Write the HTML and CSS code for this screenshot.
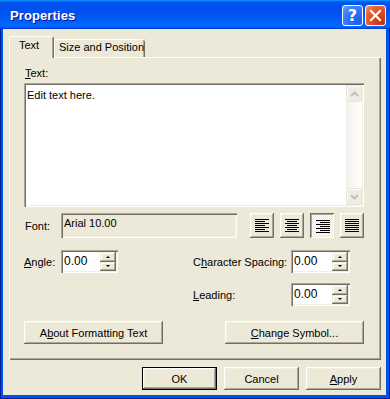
FILE: index.html
```html
<!DOCTYPE html>
<html>
<head>
<meta charset="utf-8">
<link rel="stylesheet" href="styles.css">
</head>
<body>
<div class="window">
  <div class="titlebar">
    <span class="title">Properties</span>
    <div class="tb-buttons">
      <div class="tb-btn help">?</div>
      <div class="tb-btn close">
        <svg width="13" height="13" viewBox="0 0 13 13"><path d="M2 2 L11 11 M11 2 L2 11" stroke="#fff" stroke-width="2.2" stroke-linecap="square"/></svg>
      </div>
    </div>
  </div>
  <div class="client">
    <div class="tabs">
      <div class="tab active">Text</div>
      <div class="tab">Size and Position</div>
    </div>
    <div class="panel">
      <div class="label-text"><u>T</u>ext:</div>
      <div class="textarea">
        <div class="ta-content">Edit text here.</div>
        <div class="vscroll">
          <div class="sb-btn"><svg width="9" height="6" viewBox="0 0 9 6"><path d="M1 5 L4.5 1.5 L8 5" fill="none" stroke="#c2c1b7" stroke-width="2"/></svg></div>
          <div class="sb-track"></div>
          <div class="sb-btn"><svg width="9" height="6" viewBox="0 0 9 6"><path d="M1 1 L4.5 4.5 L8 1" fill="none" stroke="#c2c1b7" stroke-width="2"/></svg></div>
        </div>
      </div>
      <div class="font-row">
        <span class="lbl">Font:</span>
        <div class="font-field">Arial 10.00</div>
        <div class="align-group">
          <div class="align-btn"><svg width="14" height="13" viewBox="0 0 14 13"><path d="M0 0.5h14M0 2.5h10M0 4.5h14M0 6.5h10M0 8.5h14M0 10.5h10M0 12.5h14" stroke="#000"/></svg></div>
          <div class="align-btn"><svg width="14" height="13" viewBox="0 0 14 13"><path d="M0 0.5h14M2 2.5h10M0 4.5h14M2 6.5h10M0 8.5h14M2 10.5h10M0 12.5h14" stroke="#000"/></svg></div>
          <div class="align-btn pressed"><svg width="14" height="13" viewBox="0 0 14 13"><path d="M0 0.5h14M4 2.5h10M0 4.5h14M4 6.5h10M0 8.5h14M4 10.5h10M0 12.5h14" stroke="#000"/></svg></div>
          <div class="align-btn"><svg width="14" height="13" viewBox="0 0 14 13"><path d="M0 0.5h14M0 2.5h14M0 4.5h14M0 6.5h14M0 8.5h14M0 10.5h14M0 12.5h14" stroke="#000"/></svg></div>
        </div>
      </div>
      <div class="spin-grid">
        <span class="lbl"><u>A</u>ngle:</span>
        <div class="spinner"><span class="val">0.00</span><div class="spin-btns"><div class="spin-b"><i class="up"></i></div><div class="spin-b"><i class="down"></i></div></div></div>
        <span></span>
        <span class="lbl">C<u>h</u>aracter Spacing:</span>
        <div class="spinner"><span class="val">0.00</span><div class="spin-btns"><div class="spin-b"><i class="up"></i></div><div class="spin-b"><i class="down"></i></div></div></div>
        <span></span><span></span><span></span>
        <span class="lbl"><u>L</u>eading:</span>
        <div class="spinner"><span class="val">0.00</span><div class="spin-btns"><div class="spin-b"><i class="up"></i></div><div class="spin-b"><i class="down"></i></div></div></div>
      </div>
      <div class="btn-row">
        <div class="btn wide">A<u>b</u>out Formatting Text</div>
        <div class="btn wide"><u>C</u>hange Symbol...</div>
      </div>
    </div>
    <div class="footer">
      <div class="btn default">OK</div>
      <div class="btn">Cancel</div>
      <div class="btn"><u>A</u>pply</div>
    </div>
  </div>
</div>
</body>
</html>
```
FILE: styles.css
```css
* { box-sizing: border-box; }
html, body { margin: 0; padding: 0; }
body {
  width: 390px;
  height: 399px;
  overflow: hidden;
  font-family: "Liberation Sans", Arial, sans-serif;
  font-size: 11px;
  color: #000;
  background: #0831d9;
}
u { text-decoration: underline; text-underline-offset: 1px; }

.window {
  width: 390px;
  height: 399px;
  display: flex;
  flex-direction: column;
  background: #0054e3;
  box-shadow: inset 1px 0 #001ea0, inset -1px 0 #001ea0, inset 0 -1px #001ea0;
}

.titlebar {
  height: 29px;
  flex: none;
  display: flex;
  align-items: center;
  justify-content: space-between;
  padding: 0 4px 0 10px;
  background: linear-gradient(180deg, #0997ff 0, #0053ee 8%, #0050ee 40%, #0066ff 88%, #0066ff 93%, #005bff 95%, #003dd7 96%, #003dd7 100%);
}
.title {
  color: #fff;
  font-family: "Liberation Sans", Arial, sans-serif;
  font-weight: bold;
  font-size: 13px;
  letter-spacing: 0.1px;
  text-shadow: 1px 1px #0f1089;
  margin-top: 1px;
}
.tb-buttons { display: flex; gap: 2px; margin-top: 2px; }
.tb-btn {
  width: 21px;
  height: 21px;
  border: 1px solid #fff;
  border-radius: 3px;
  display: flex;
  align-items: center;
  justify-content: center;
}
.tb-btn.help {
  background: radial-gradient(circle at 80% 85%, #1a5ff0 0, #2b6cf5 40%, #3f88fb 75%, #73a8fa 100%);
  color: #fff;
  font-family: "DejaVu Sans", sans-serif;
  font-weight: bold;
  font-size: 16px;
  line-height: 1;
}
.tb-btn.close {
  background: radial-gradient(circle at 85% 85%, #c2330b 0, #d74a21 40%, #e4663f 75%, #f0a283 100%);
}

.client {
  flex: 1;
  margin: 0 4px 4px 3px;
  background: #ece9d8;
  padding: 7px 5px 0 6px;
  display: flex;
  flex-direction: column;
}

.tabs {
  display: flex;
  align-items: flex-end;
  height: 21px;
  position: relative;
  z-index: 1;
}
.tab {
  height: 18px;
  padding: 0 4px 0 5px;
  line-height: 17px;
  background: #ece9d8;
  box-shadow: inset 1px 0 #fff, inset 0 1px #fff, inset -1px 0 #716f64, inset -2px 0 #aca899;
  border-radius: 2px 2px 0 0;
  white-space: nowrap;
  width: 91px;
}
.tab.active {
  height: 22px;
  margin-bottom: -1px;
  width: 45px;
  padding: 2px 0 0 10px;
  line-height: 15px;
}

.panel {
  height: 303px;
  width: 372px;
  background: #ece9d8;
  box-shadow: inset 1px 1px #fff, inset -1px -1px #716f64, inset -2px -2px #aca899;
  padding: 0 17px 0 15px;
  display: flex;
  flex-direction: column;
}

.label-text {
  margin-top: 9px;
  height: 14px;
  line-height: 14px;
  padding-left: 1px;
}
.textarea {
  margin-top: 3px;
  width: 340px;
  height: 124px;
  background: #fff;
  box-shadow: inset 1px 1px #aca899, inset 2px 2px #716f64, inset -1px -1px #fff, inset -2px -2px #f1efe2;
  padding: 2px;
  display: flex;
}
.ta-content {
  flex: 1;
  padding: 3px 0 0 1px;
  line-height: 14px;
}
.vscroll {
  width: 16px;
  display: flex;
  flex-direction: column;
  background: linear-gradient(90deg, #f3f1ec, #fefefb);
}
.sb-btn {
  height: 17px;
  background: #eeede5;
  border: 1px solid #e8e6dc;
  border-radius: 2px;
  display: flex;
  align-items: center;
  justify-content: center;
  box-shadow: inset 1px 1px #fbfbf8;
}
.sb-track { flex: 1; }

.font-row {
  margin-top: 6px;
  height: 25px;
  display: flex;
  align-items: center;
}
.lbl { white-space: nowrap; }
.font-row .lbl { width: 37px; padding-left: 1px; }
.font-field {
  width: 176px;
  height: 25px;
  background: #ece9d8;
  box-shadow: inset 1px 1px #aca899, inset 2px 2px #716f64, inset -1px -1px #fff, inset -2px -2px #f1efe2;
  padding: 3px 0 0 3px;
  line-height: 14px;
}
.align-group {
  margin-left: 13px;
  display: flex;
  gap: 6px;
}
.align-btn {
  width: 24px;
  height: 25px;
  background: #ece9d8;
  box-shadow: inset -1px -1px #716f64, inset 1px 1px #fff, inset -2px -2px #aca899, inset 2px 2px #f1efe2;
  display: flex;
  align-items: center;
  justify-content: center;
}
.align-btn.pressed {
  background: repeating-conic-gradient(#fff 0 25%, #ece9d8 0 50%) 0 0 / 2px 2px;
  box-shadow: inset 1px 1px #716f64, inset -1px -1px #fff, inset 2px 2px #aca899, inset -2px -2px #f1efe2;
}
.align-btn.pressed svg { margin: 1px 0 0 1px; }

.spin-grid {
  margin-top: 12px;
  display: grid;
  grid-template-columns: 37px 57px 75px 98px 59px;
  grid-auto-rows: 23px;
  row-gap: 10px;
  align-items: center;
}
.spinner {
  height: 23px;
  background: #fff;
  box-shadow: inset 1px 1px #aca899, inset 2px 2px #716f64, inset -1px -1px #fff, inset -2px -2px #f1efe2;
  padding: 2px;
  display: flex;
}
.spinner .val {
  flex: 1;
  padding: 2px 0 0 1px;
  line-height: 14px;
  font-size: 12px;
}
.spin-btns {
  width: 16px;
  display: flex;
  flex-direction: column;
}
.spin-b {
  flex: 1;
  background: #ece9d8;
  box-shadow: inset -1px -1px #716f64, inset 1px 1px #f1efe2, inset -2px -2px #aca899, inset 2px 2px #fff;
  display: flex;
  align-items: center;
  justify-content: center;
}
.spin-b i {
  width: 0;
  height: 0;
  border-left: 2px solid transparent;
  border-right: 2px solid transparent;
}
.spin-b i.up { border-bottom: 2px solid #000; }
.spin-b i.down { border-top: 2px solid #000; }

.btn-row {
  margin-top: 15px;
  display: flex;
  justify-content: space-between;
}
.btn {
  width: 75px;
  height: 23px;
  background: #ece9d8;
  box-shadow: inset -1px -1px #716f64, inset 1px 1px #fff, inset -2px -2px #aca899, inset 2px 2px #f1efe2;
  display: flex;
  align-items: center;
  justify-content: center;
  white-space: nowrap;
}
.btn.wide { width: 139px; }
.btn.default {
  box-shadow: inset 0 0 0 1px #000, inset -2px -2px #716f64, inset 2px 2px #fff, inset -3px -3px #aca899, inset 3px 3px #f1efe2;
}

.footer {
  margin-top: 7px;
  display: flex;
  justify-content: flex-end;
  gap: 7px;
}
```
